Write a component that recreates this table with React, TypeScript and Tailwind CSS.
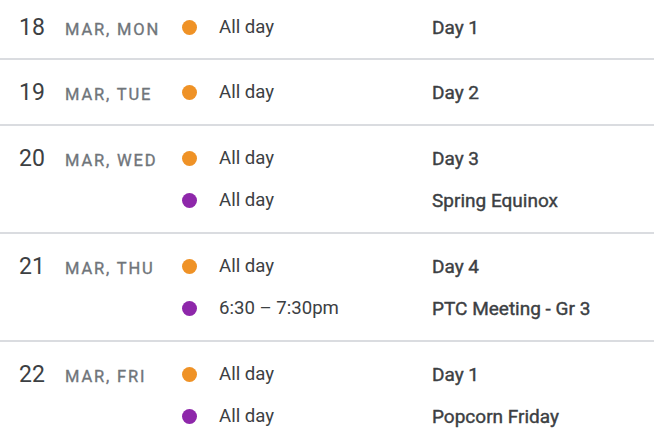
import React from "react";

type Ev = { color: string; time: string; title: string };
type Day = { n: string; label: string; events: Ev[] };

const ORANGE = "bg-[#ef9226]";
const PURPLE = "bg-[#8e27aa]";

const days: Day[] = [
  { n: "18", label: "Mar, Mon", events: [{ color: ORANGE, time: "All day", title: "Day 1" }] },
  { n: "19", label: "Mar, Tue", events: [{ color: ORANGE, time: "All day", title: "Day 2" }] },
  {
    n: "20",
    label: "Mar, Wed",
    events: [
      { color: ORANGE, time: "All day", title: "Day 3" },
      { color: PURPLE, time: "All day", title: "Spring Equinox" },
    ],
  },
  {
    n: "21",
    label: "Mar, Thu",
    events: [
      { color: ORANGE, time: "All day", title: "Day 4" },
      { color: PURPLE, time: "6:30 – 7:30pm", title: "PTC Meeting - Gr 3" },
    ],
  },
  {
    n: "22",
    label: "Mar, Fri",
    events: [
      { color: ORANGE, time: "All day", title: "Day 1" },
      { color: PURPLE, time: "All day", title: "Popcorn Friday" },
    ],
  },
];

export default function App() {
  return (
    <div className="w-[654px] h-[446px] overflow-hidden bg-white font-['Roboto',sans-serif] text-[#3c4043]">
      {days.map((d, i) => (
        <div
          key={d.n}
          className={`flex pl-[19px] border-b-2 border-[#dadce0] ${i === 0 ? "pt-[6px] pb-[10px]" : "py-[11px]"}`}
        >
          <div className="w-[163px] h-[42px] flex items-center shrink-0">
            <span className="w-[46px] text-[23px] leading-none">{d.n}</span>
            <span className="mt-[6px] uppercase text-[16.5px] font-normal tracking-[1.85px] text-[#70757a] leading-none [-webkit-text-stroke:0.35px_#70757a]">
              {d.label}
            </span>
          </div>
          <div className="flex flex-col">
            {d.events.map((e, j) => (
              <div key={j} className="h-[42px] flex items-center">
                <span className={`w-[15px] h-[15px] rounded-full ${e.color} shrink-0`} />
                <span className="ml-[22px] w-[213px] text-[18.6px] leading-none">{e.time}</span>
                <span className="text-[19px] font-normal leading-none [-webkit-text-stroke:0.4px_#3c4043]">
                  {e.title}
                </span>
              </div>
            ))}
          </div>
        </div>
      ))}
    </div>
  );
}
